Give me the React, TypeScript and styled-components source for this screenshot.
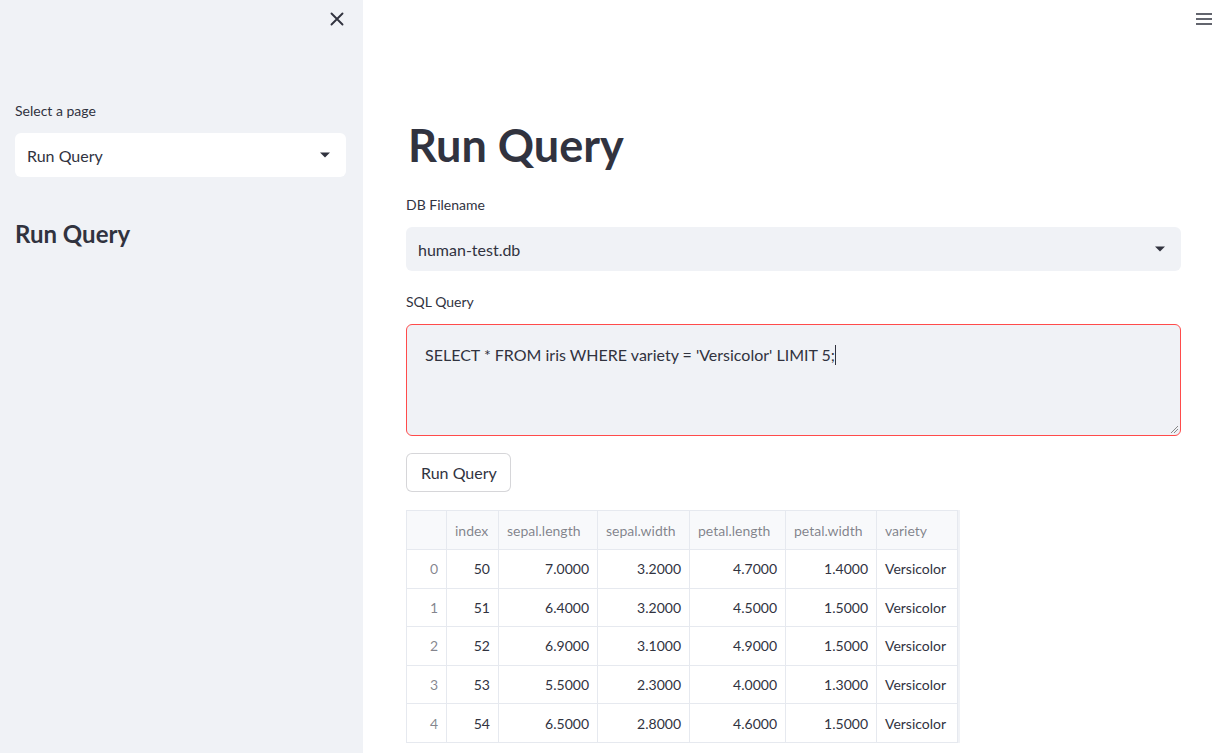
import React from "react";
import styled, { createGlobalStyle } from "styled-components";

const Global = createGlobalStyle`
  html, body { margin: 0; padding: 0; }
  body {
    font-family: "Source Sans Pro", Lato, "Noto Sans", sans-serif;
    color: #31333f;
    background: #ffffff;
    -webkit-font-smoothing: antialiased;
  }
  * { box-sizing: border-box; }
`;

const Shell = styled.div`
  display: flex;
  width: 1219px;
  height: 753px;
  overflow: hidden;
`;

const Sidebar = styled.aside`
  width: 363px;
  flex: 0 0 363px;
  background: #f0f2f6;
  display: flex;
  flex-direction: column;
`;

const SideHeader = styled.div`
  height: 38px;
  display: flex;
  justify-content: flex-end;
  align-items: center;
  padding-right: 14px;
`;

const IconButton = styled.button`
  width: 24px;
  height: 24px;
  border: none;
  background: transparent;
  padding: 0;
  display: flex;
  align-items: center;
  justify-content: center;
  color: #31333f;
  cursor: pointer;
`;

const SideBody = styled.div`
  padding: 62px 17px 0 15px;
  display: flex;
  flex-direction: column;
`;

const Label = styled.label`
  font-size: 14px;
  line-height: 22px;
  color: #31333f;
  margin-bottom: 11px;
  display: block;
`;

const SelectBox = styled.div<{ $bg: string }>`
  height: 44px;
  border-radius: 6px;
  background: ${(p) => p.$bg};
  display: flex;
  align-items: center;
  justify-content: space-between;
  padding: 0 15px 0 12px;
  font-size: 16px;
  color: #31333f;
`;

const SideTitle = styled.h2`
  margin: 42px 0 0 0;
  font-size: 24px;
  line-height: 30px;
  font-weight: 700;
  color: #31333f;
`;

const Main = styled.main`
  flex: 1;
  display: flex;
  flex-direction: column;
`;

const TopBar = styled.div`
  height: 38px;
  display: flex;
  justify-content: flex-end;
  align-items: center;
  padding-right: 3px;
`;

const Content = styled.div`
  width: 775px;
  margin-left: 43px;
  display: flex;
  flex-direction: column;
`;

const Title = styled.h1`
  margin: 79px 0 0 2px;
  font-size: 45px;
  line-height: 56px;
  font-weight: 700;
  color: #31333f;
  letter-spacing: 0px;
`;

const FieldLabel = styled(Label)<{ $top: number }>`
  margin-top: ${(p) => p.$top}px;
`;

const QueryArea = styled.div`
  position: relative;
  height: 112px;
  background: #f0f2f6;
  border: 1px solid #ff4b4b;
  border-radius: 6px;
  padding: 19px 18px;
  font-size: 16px;
  line-height: 22px;
  color: #31333f;
`;

const Caret = styled.span`
  display: inline-block;
  width: 1px;
  height: 20px;
  background: #31333f;
  vertical-align: -4px;
`;

const Grip = styled.svg`
  position: absolute;
  right: 1px;
  bottom: 1px;
`;

const Button = styled.button`
  align-self: flex-start;
  margin-top: 17px;
  height: 39px;
  padding: 0 13px 0 14px;
  font-family: inherit;
  font-size: 16px;
  color: #31333f;
  background: #ffffff;
  border: 1px solid rgba(49, 51, 63, 0.2);
  border-radius: 6px;
`;

const Table = styled.table`
  margin-top: 18px;
  align-self: flex-start;
  border-collapse: collapse;
  font-size: 14px;
  border: 1px solid #e6e9ef;
  box-shadow: 2px 0 0 #f0f2f6;
`;

const Th = styled.th<{ $w: number }>`
  width: ${(p) => p.$w}px;
  height: 39px;
  background: #f8f9fb;
  color: rgba(49, 51, 63, 0.6);
  font-weight: 400;
  text-align: left;
  padding: 0 8px;
  border: 1px solid #e6e9ef;
  white-space: nowrap;
`;

const Td = styled.td<{ $muted?: boolean; $left?: boolean }>`
  height: 38.6px;
  padding: 0 8px;
  text-align: ${(p) => (p.$left ? "left" : "right")};
  color: ${(p) => (p.$muted ? "rgba(49, 51, 63, 0.6)" : "#31333f")};
  border: 1px solid #e6e9ef;
  white-space: nowrap;
`;

const Chevron = () => (
  <svg width="12" height="8" viewBox="0 0 12 8">
    <path d="M1 1.5 L11 1.5 L6 6.5 Z" fill="#31333f" />
  </svg>
);

const cols: [string, number][] = [
  ["", 40],
  ["index", 52],
  ["sepal.length", 99],
  ["sepal.width", 92],
  ["petal.length", 96],
  ["petal.width", 91],
  ["variety", 81],
];

const rows = [
  [50, "7.0000", "3.2000", "4.7000", "1.4000", "Versicolor"],
  [51, "6.4000", "3.2000", "4.5000", "1.5000", "Versicolor"],
  [52, "6.9000", "3.1000", "4.9000", "1.5000", "Versicolor"],
  [53, "5.5000", "2.3000", "4.0000", "1.3000", "Versicolor"],
  [54, "6.5000", "2.8000", "4.6000", "1.5000", "Versicolor"],
];

export default function App() {
  return (
    <>
      <Global />
      <Shell>
        <Sidebar>
          <SideHeader>
            <IconButton aria-label="Close sidebar">
              <svg width="16" height="16" viewBox="0 0 16 16">
                <path d="M2.5 2.5 L13.5 13.5 M13.5 2.5 L2.5 13.5" stroke="#31333f" strokeWidth="1.9" strokeLinecap="round" />
              </svg>
            </IconButton>
          </SideHeader>
          <SideBody>
            <Label>Select a page</Label>
            <SelectBox $bg="#ffffff">
              <span>Run Query</span>
              <Chevron />
            </SelectBox>
            <SideTitle>Run Query</SideTitle>
          </SideBody>
        </Sidebar>
        <Main>
          <TopBar>
            <IconButton aria-label="Menu">
              <svg width="18" height="14" viewBox="0 0 18 14">
                <path d="M1 2 H17 M1 7 H17 M1 12 H17" stroke="#31333f" strokeWidth="1.6" />
              </svg>
            </IconButton>
          </TopBar>
          <Content>
            <Title>Run Query</Title>
            <FieldLabel $top={21}>DB Filename</FieldLabel>
            <SelectBox $bg="#f0f2f6">
              <span>human-test.db</span>
              <Chevron />
            </SelectBox>
            <FieldLabel $top={20}>SQL Query</FieldLabel>
            <QueryArea>
              SELECT * FROM iris WHERE variety = 'Versicolor' LIMIT 5;<Caret />
              <Grip width="10" height="10" viewBox="0 0 10 10">
                <path d="M9 2 L2 9 M9 5 L5 9" stroke="#888" strokeWidth="1" />
              </Grip>
            </QueryArea>
            <Button>Run Query</Button>
            <Table>
              <thead>
                <tr>
                  {cols.map(([c, w]) => (
                    <Th key={c || "blank"} $w={w}>{c}</Th>
                  ))}
                </tr>
              </thead>
              <tbody>
                {rows.map((r, i) => (
                  <tr key={i}>
                    <Td $muted>{i}</Td>
                    {r.map((v, j) => (
                      <Td key={j} $left={j === 5}>{v}</Td>
                    ))}
                  </tr>
                ))}
              </tbody>
            </Table>
          </Content>
        </Main>
      </Shell>
    </>
  );
}
